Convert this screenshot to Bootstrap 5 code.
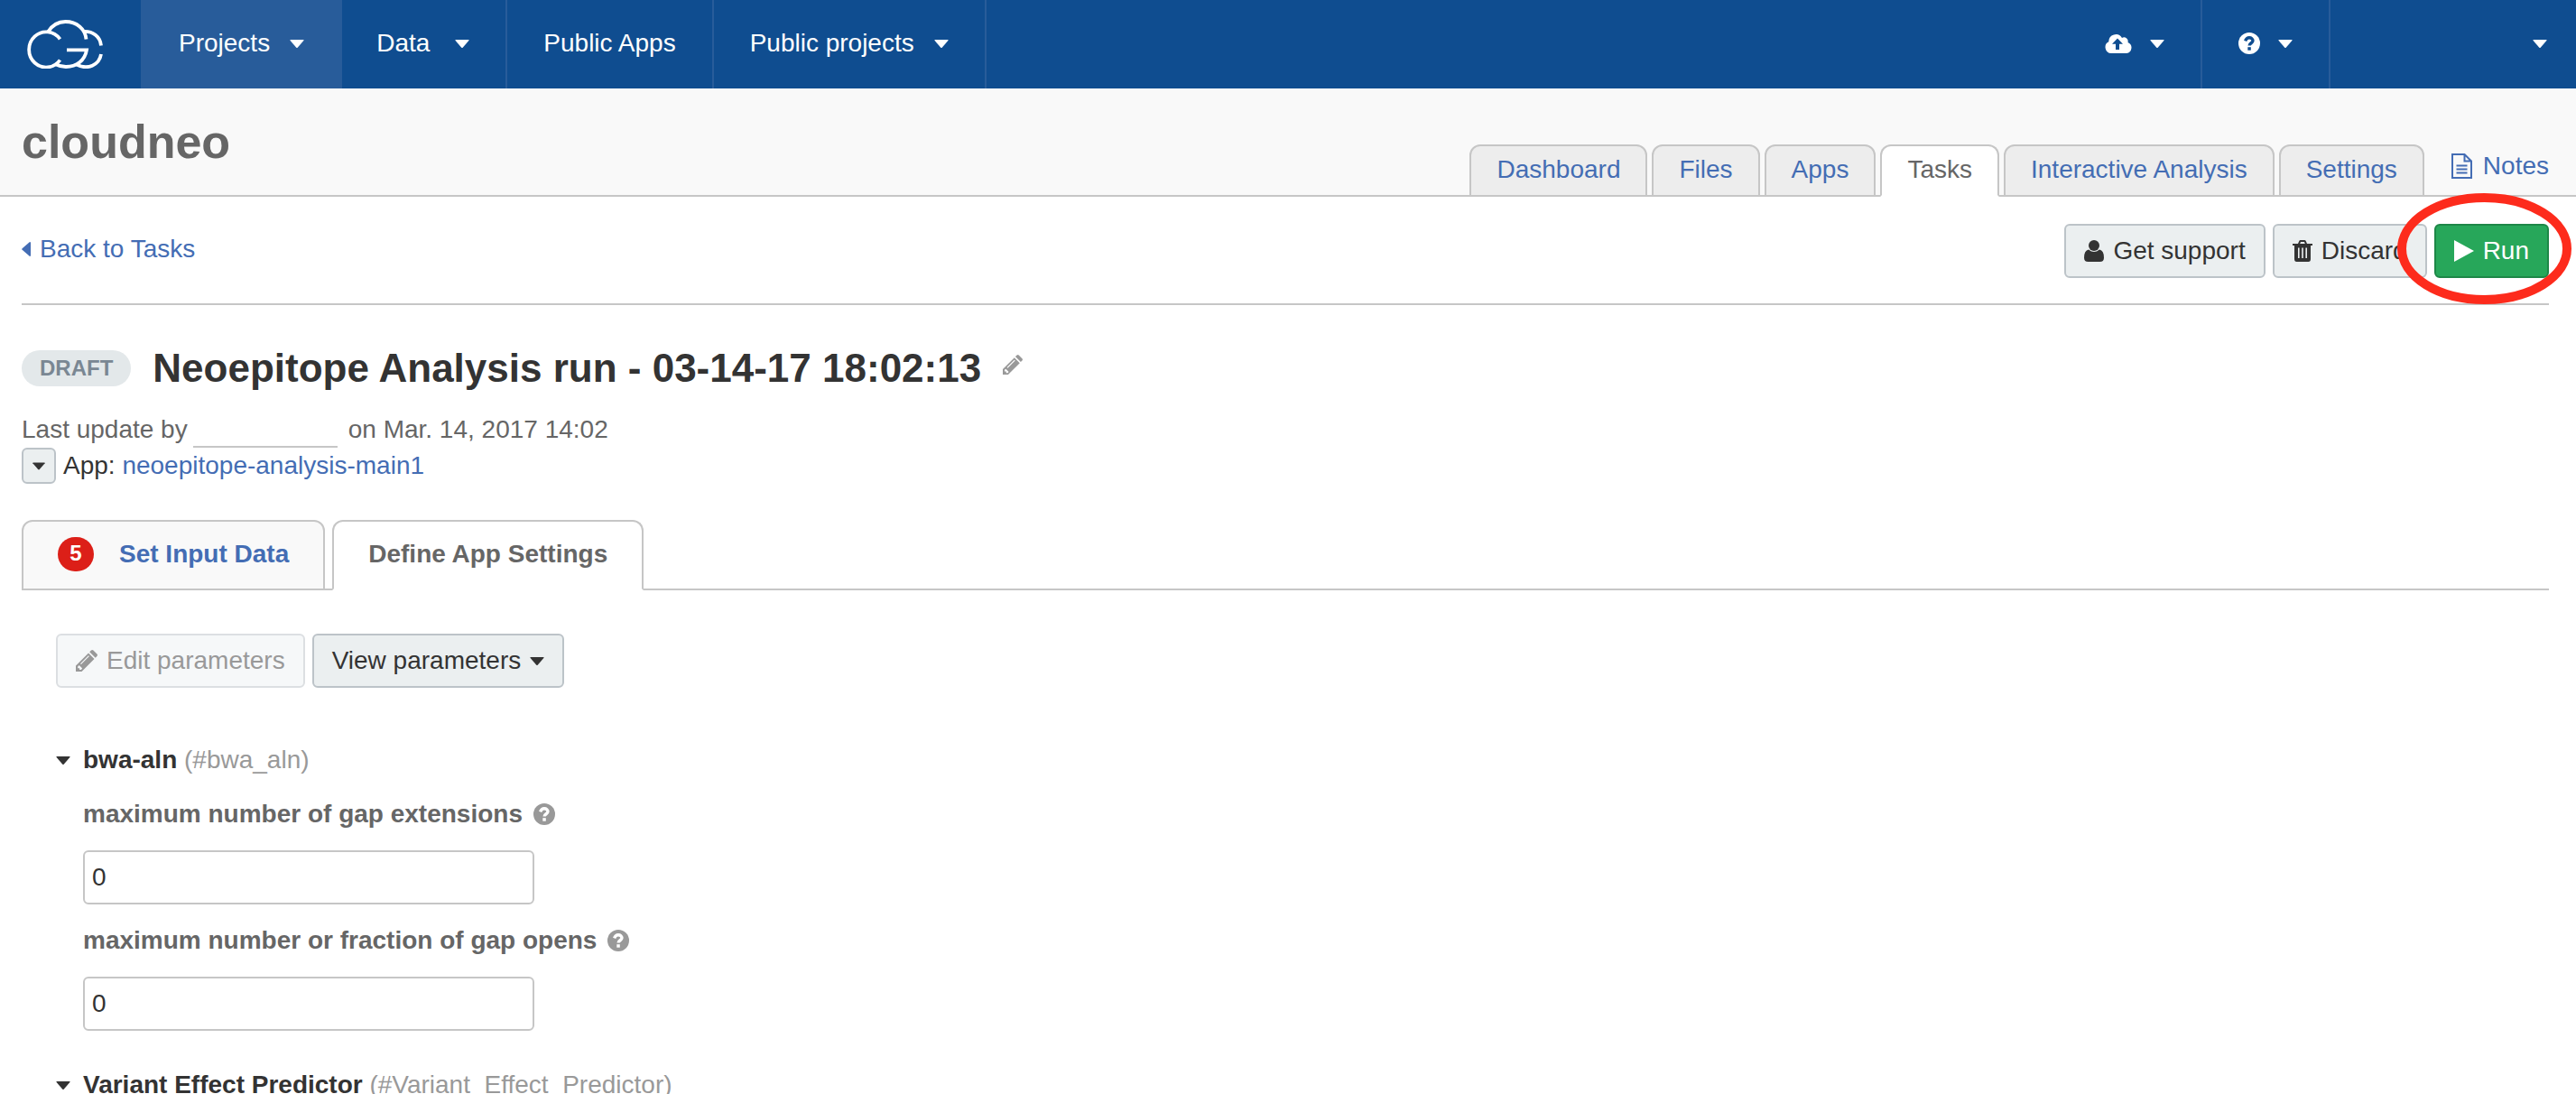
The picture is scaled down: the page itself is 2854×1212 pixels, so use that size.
<!DOCTYPE html>
<html lang="en">
<head>
<meta charset="utf-8">
<meta name="viewport" content="width=device-width, initial-scale=1">
<title>cloudneo - Tasks</title>
<link href="https://cdn.jsdelivr.net/npm/bootstrap@5.3.0/dist/css/bootstrap.min.css" rel="stylesheet">
<style>
  body { font-family: "Liberation Sans", Arial, sans-serif; font-size: 28px; line-height: 40px; color: #333; background: #fff; }
  a { color: #446db4; text-decoration: none; }
  .btn { --bs-btn-font-size: 28px; --bs-btn-line-height: 40px; --bs-btn-padding-x: 20px; --bs-btn-padding-y: 8px; --bs-btn-border-width: 2px; --bs-btn-border-radius: 6px; display: flex; align-items: center; gap: 10px; }
  .btn-soft { --bs-btn-color: #333; --bs-btn-bg: #ebeff0; --bs-btn-border-color: #bcc3c8; --bs-btn-hover-bg: #dfe5e7; --bs-btn-disabled-color: #999; --bs-btn-disabled-bg: #f6f8f9; --bs-btn-disabled-border-color: #dcdfe2; --bs-btn-disabled-opacity: 1; }
  .btn-go { --bs-btn-color: #fff; --bs-btn-bg: #27a75a; --bs-btn-border-color: #1d8747; --bs-btn-hover-color: #fff; --bs-btn-hover-bg: #1f9650; }
  .tri { width: 16px; height: 9px; fill: currentColor; flex: none; }
  .tri-sm { width: 14px; height: 9px; }

  .topnav { background: #0f4d90; }
  .topnav-logo { width: 156px; padding: 22px 0 22px 30px; }
  .topnav-link { display: flex; align-items: center; gap: 22px; padding: 28px 40px 30px; color: #fff; border-right: 2px solid #285c9a; }
  .topnav-link.current { background: #285c9a; padding-left: 42px; }
  .topnav-link.wide { gap: 28px; padding-left: 38px; }
  .topnav-tool { gap: 20px; }
  .topnav-user { width: 272px; border: 0; padding-right: 32px; }

  .project-head { background: #f9f9f9; border-bottom: 2px solid #c6c6c6; padding-left: 24px; padding-right: 30px; }
  .project-name { font-size: 52px; line-height: 60px; font-weight: 700; color: #666; padding-top: 29px; }
  .project-menu { padding-top: 62px; }
  .project-tabs { gap: 5px; margin-bottom: -2px; }
  .project-tabs .nav-link { border: 2px solid #c6c6c6; border-radius: 12px 12px 0 0; background: #ededed; color: #446db4; padding: 6px 28px 8px; line-height: 40px; }
  .project-tabs .nav-link.active { background: #fff; color: #666; border-bottom-color: #fff; }
  .notes-link { gap: 12px; padding: 4px 0 12px; margin-left: 30px; }

  .page-main { padding: 0 30px 0 24px; }
  .action-bar { padding: 30px 0 28px; border-bottom: 2px solid #c6c6c6; }
  .back-link { gap: 10px; padding-bottom: 4px; }
  .callout-ring { left: -41px; top: -34px; width: 193px; height: 123px; pointer-events: none; }
  .draft-pill { font-size: 24px; line-height: 40px; font-weight: 700; color: #7a8793; background: #e3e8ea; border-radius: 20px; padding: 0 20px; }
  .task-title { font-size: 44px; line-height: 56px; font-weight: 700; }
  .title-row { gap: 24px; padding-top: 42px; }
  .meta-line { color: #666; padding-top: 20px; }
  .redacted { width: 160px; height: 40px; margin: 0 12px 0 6px; border-bottom: 2px solid #c6c6c6; }
  .btn-mini { --bs-btn-padding-x: 10px; --bs-btn-padding-y: 0; width: 38px; height: 40px; }
  .step-tabs { gap: 8px; margin-top: 40px; border-bottom: 2px solid #c6c6c6; }
  .step-tabs .nav-link { display: flex; align-items: center; font-weight: 700; border: 2px solid #c6c6c6; border-radius: 12px 12px 0 0; margin-bottom: -2px; padding: 16px 38px 18px; background: #f9f9f9; color: #446db4; }
  .step-tabs .nav-link.active { background: #fff; color: #666; border-bottom-color: #fff; }
  .step-count { width: 40px; height: 38px; line-height: 36px; border-radius: 19px; background: #dc1f18; color: #fff; font-size: 24px; text-align: center; margin-right: 28px; }
  .params { padding: 48px 38px 0; }
  .tool-group { gap: 8px; }
  .param-section { padding-top: 60px; }
  .param-section + .param-section { padding-top: 40px; }
  .group-title { gap: 14px; font-weight: 700; color: #333; }
  .group-id { font-weight: 400; color: #999; }
  .param-body { display: flex; flex-direction: column; gap: 20px; padding: 20px 0 0 30px; }
  .param-label { font-weight: 700; color: #666; }
  .label-row { gap: 12px; }
  .param-input { width: 500px; height: 60px; font-size: 28px; line-height: 40px; color: #333; border: 2px solid #c6c6c6; border-radius: 6px; padding: 8px; }
</style>
</head>
<body class="vh-100 overflow-hidden">
<svg class="d-none" aria-hidden="true">
  <symbol id="down" viewBox="0 0 16 9"><path d="M1 0h14q1 0 .6.8L8.9 8.500q-.9 1-1.800 0L.4.8Q0 0 1 0z"/></symbol>
  <symbol id="pencil" viewBox="0 0 24 24"><path fill-rule="evenodd" d="M0 24v-6.500L14 3.500l6.500 6.500L6.500 24zM2.200 18.400v1.900h1.900v1.700h1.700l1.400-1.400-3.500-3.500zM14 6.200L5 15.200l.9.9 9-9zM15.200 2.300L17 .6q1.200-1.200 2.400 0l4 4q1.200 1.200 0 2.400l-1.700 1.800z"/></symbol>
  <symbol id="help" viewBox="0 0 24 24"><circle cx="12" cy="12" r="12"/><path d="M7.600 9.400C8.500 7 10 5.800 12 5.800c2.300 0 4 1.300 4 3.300 0 2.700-3.900 2.600-3.900 5.500" fill="none" stroke="var(--cut)" stroke-width="3.400"/><path fill="var(--cut)" d="M10.300 16.200h3.500v3.500h-3.500z"/></symbol>
</svg>

<nav class="topnav d-flex align-items-stretch" aria-label="Main">
  <a class="topnav-logo" href="#" aria-label="Home">
    <svg class="d-block" width="84" height="54" viewBox="0 0 84 54" fill="none" stroke="#fff" stroke-width="3.800">
      <path d="M36.500 21.400A19 19.600 0 1 0 36.500 44.500"/>
      <path d="M23 13.500C28 5.500 34 2 42.500 2 55 2 64.500 10 65.500 21.500"/>
      <path d="M62.500 13C73 12.500 81 18.500 82 28.500"/>
      <path d="M44 33.400H66C64 45 55 52 43 52 39 52 35 51 31 49"/>
      <path d="M55 49.500C67 56 80 50 82 38"/>
    </svg>
  </a>
  <a class="topnav-link current" href="#">Projects <svg class="tri"><use href="#down"/></svg></a>
  <a class="topnav-link wide" href="#">Data <svg class="tri"><use href="#down"/></svg></a>
  <a class="topnav-link" href="#">Public Apps</a>
  <a class="topnav-link" href="#">Public projects <svg class="tri"><use href="#down"/></svg></a>
  <a class="topnav-link topnav-tool ms-auto" href="#" aria-label="Upload">
    <svg width="30" height="22" viewBox="0 0 30 22"><path fill="#fff" d="M7 22A6.700 6.700 0 0 1 4.300 9.300 7.900 7.900 0 0 1 19 5a4.400 4.400 0 0 1 6.500 4.900A6.300 6.300 0 0 1 24 22z"/><path fill="#0f4d90" d="M14 5.500l6 6.200h-4V18h-4v-6.300H8z"/></svg>
    <svg class="tri"><use href="#down"/></svg></a>
  <a class="topnav-link topnav-tool" href="#" aria-label="Help">
    <svg width="24" height="24" fill="#fff" style="--cut:#0f4d90"><use href="#help"/></svg>
    <svg class="tri"><use href="#down"/></svg></a>
  <a class="topnav-link topnav-user justify-content-end" href="#" aria-label="Account"><svg class="tri"><use href="#down"/></svg></a>
</nav>

<header class="project-head d-flex justify-content-between">
  <h1 class="project-name mb-0">cloudneo</h1>
  <div class="project-menu d-flex align-items-end">
    <ul class="project-tabs nav">
      <li><a class="nav-link" href="#">Dashboard</a></li>
      <li><a class="nav-link" href="#">Files</a></li>
      <li><a class="nav-link" href="#">Apps</a></li>
      <li><a class="nav-link active" aria-current="page" href="#">Tasks</a></li>
      <li><a class="nav-link" href="#">Interactive Analysis</a></li>
      <li><a class="nav-link" href="#">Settings</a></li>
    </ul>
    <a class="notes-link d-flex align-items-center" href="#">
      <svg width="23" height="28" viewBox="0 0 23 28" fill="none" stroke="currentColor" stroke-width="2"><path d="M1 1h13.500L22 8.500V27H1zM14.500 1v7.500H22M5.500 13.500h12M5.500 17.500h12M5.500 21.500h12"/></svg>Notes</a>
  </div>
</header>

<main class="page-main">
  <div class="action-bar d-flex align-items-center justify-content-between">
    <a class="back-link d-flex align-items-center" href="#"><svg width="10" height="16" viewBox="0 0 10 16" fill="currentColor"><path d="M9 0q1 0 1 1v14q0 1-1 1L.6 8.800Q-.2 8 .6 7.200z"/></svg>Back to Tasks</a>
    <div class="tool-group d-flex">
      <button type="button" class="btn btn-soft">
        <svg width="22" height="24" viewBox="0 0 22 24" fill="currentColor"><circle cx="11" cy="6" r="6"/><path d="M5 10.500Q11 15.500 17 10.500 22 11.500 22 19.500 22 24 17.500 24H4.500Q0 24 0 19.500 0 11.500 5 10.500z"/></svg>Get support</button>
      <button type="button" class="btn btn-soft">
        <svg width="22" height="24" viewBox="0 0 22 24" fill="currentColor"><path fill-rule="evenodd" d="M0 4h6l1.300-3Q7.700 0 8.700 0h4.600q1 0 1.400 1L16 4h6v2h-2v15q0 3-2.500 3h-13Q2 24 2 21V6H0zM8.200 4h5.600l-.8-2H9zM6 8.500V20h1.600V8.500zM10.200 8.500V20h1.600V8.500zM14.400 8.500V20H16V8.500z"/></svg>Discard</button>
      <div class="position-relative">
        <button type="button" class="btn btn-go">
          <svg width="22" height="24" viewBox="0 0 22 24" fill="currentColor"><path d="M0 0l22 12L0 24z"/></svg>Run</button>
        <svg class="callout-ring position-absolute" viewBox="0 0 193 123" fill="none" stroke="#fd2b1c" stroke-width="10"><ellipse cx="96.500" cy="61.500" rx="91.500" ry="56.500"/></svg>
      </div>
    </div>
  </div>

  <div class="title-row d-flex align-items-center">
    <span class="draft-pill">DRAFT</span>
    <h2 class="task-title mb-0">Neoepitope Analysis run - 03-14-17 18:02:13</h2>
    <a href="#" class="d-flex pb-2" aria-label="Rename"><svg width="22" height="22" viewBox="0 0 24 24" fill="#999"><use href="#pencil"/></svg></a>
  </div>
  <div class="meta-line d-flex"><span>Last update by</span><span class="redacted"></span><span>on Mar. 14, 2017 14:02</span></div>
  <div class="d-flex gap-2">
    <button type="button" class="btn btn-soft btn-mini" aria-label="App options"><svg class="tri tri-sm"><use href="#down"/></svg></button>
    <span>App: <a href="#">neoepitope-analysis-main1</a></span>
  </div>

  <ul class="step-tabs nav">
    <li><a class="nav-link" href="#"><span class="step-count">5</span>Set Input Data</a></li>
    <li><a class="nav-link active" aria-current="page" href="#">Define App Settings</a></li>
  </ul>

  <form class="params">
    <div class="tool-group d-flex">
      <button type="button" class="btn btn-soft" disabled><svg width="24" height="24" fill="currentColor"><use href="#pencil"/></svg>Edit parameters</button>
      <button type="button" class="btn btn-soft">View parameters <svg class="tri"><use href="#down"/></svg></button>
    </div>
    <section class="param-section">
      <div class="group-title d-flex align-items-center"><svg class="tri"><use href="#down"/></svg><span>bwa-aln <span class="group-id">(#bwa_aln)</span></span></div>
      <div class="param-body">
        <div class="label-row d-flex align-items-center"><label class="param-label" for="gapext">maximum number of gap extensions</label><svg width="24" height="24" fill="#999" style="--cut:#fff"><use href="#help"/></svg></div>
        <input class="param-input form-control" id="gapext" type="text" value="0">
        <div class="label-row d-flex align-items-center"><label class="param-label" for="gapopen">maximum number or fraction of gap opens</label><svg width="24" height="24" fill="#999" style="--cut:#fff"><use href="#help"/></svg></div>
        <input class="param-input form-control" id="gapopen" type="text" value="0">
      </div>
    </section>
    <section class="param-section">
      <div class="group-title d-flex align-items-center"><svg class="tri"><use href="#down"/></svg><span>Variant Effect Predictor <span class="group-id">(#Variant_Effect_Predictor)</span></span></div>
    </section>
  </form>
</main>
<script src="https://cdn.jsdelivr.net/npm/bootstrap@5.3.0/dist/js/bootstrap.bundle.min.js"></script>
</body>
</html>
